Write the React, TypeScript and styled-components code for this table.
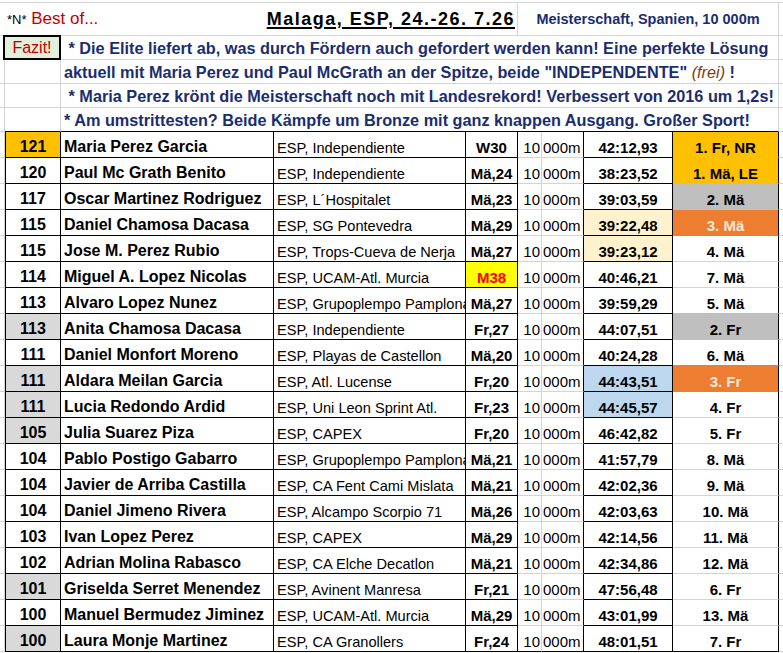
import React from "react";
import styled, { createGlobalStyle, css } from "styled-components";

const FONT = `"Liberation Sans", Arial, Helvetica, sans-serif`;
const GRID = "#d4d4d4";
const INK = "#000";
const NAVY = "#1a2d6e";
const GOLD = "#ffc000";
const SILVER = "#bfbfbf";
const BRONZE = "#ed7d31";
const WOMAN = "#d9d9d9";
const CREAM = "#fff2cc";
const BLUE = "#bdd7ee";

type Runner = {
  score: number;
  name: string;
  club: string;
  age: string;
  time: string;
  place: string;
  scoreBg?: string;
  timeBg?: string;
  placeBg?: string;
  ageFlag?: boolean;
};

const runners: Runner[] = [
  { score: 121, name: "Maria Perez Garcia", club: "ESP, Independiente", age: "W30", time: "42:12,93", place: "1. Fr, NR", scoreBg: GOLD, placeBg: GOLD },
  { score: 120, name: "Paul Mc Grath Benito", club: "ESP, Independiente", age: "Mä,24", time: "38:23,52", place: "1. Mä, LE", placeBg: GOLD },
  { score: 117, name: "Oscar Martinez Rodriguez", club: "ESP, L´Hospitalet", age: "Mä,23", time: "39:03,59", place: "2. Mä", placeBg: SILVER },
  { score: 115, name: "Daniel Chamosa Dacasa", club: "ESP, SG Pontevedra", age: "Mä,29", time: "39:22,48", place: "3. Mä", timeBg: CREAM, placeBg: BRONZE },
  { score: 115, name: "Jose M. Perez Rubio", club: "ESP, Trops-Cueva de Nerja", age: "Mä,27", time: "39:23,12", place: "4. Mä", timeBg: CREAM },
  { score: 114, name: "Miguel A. Lopez Nicolas", club: "ESP, UCAM-Atl. Murcia", age: "M38", time: "40:46,21", place: "7. Mä", ageFlag: true },
  { score: 113, name: "Alvaro Lopez Nunez", club: "ESP, Grupoplempo Pamplona", age: "Mä,27", time: "39:59,29", place: "5. Mä" },
  { score: 113, name: "Anita Chamosa Dacasa", club: "ESP, Independiente", age: "Fr,27", time: "44:07,51", place: "2. Fr", scoreBg: WOMAN, placeBg: SILVER },
  { score: 111, name: "Daniel Monfort Moreno", club: "ESP, Playas de Castellon", age: "Mä,20", time: "40:24,28", place: "6. Mä" },
  { score: 111, name: "Aldara Meilan Garcia", club: "ESP, Atl. Lucense", age: "Fr,20", time: "44:43,51", place: "3. Fr", scoreBg: WOMAN, timeBg: BLUE, placeBg: BRONZE },
  { score: 111, name: "Lucia Redondo Ardid", club: "ESP, Uni Leon Sprint Atl.", age: "Fr,23", time: "44:45,57", place: "4. Fr", scoreBg: WOMAN, timeBg: BLUE },
  { score: 105, name: "Julia Suarez Piza", club: "ESP, CAPEX", age: "Fr,20", time: "46:42,82", place: "5. Fr", scoreBg: WOMAN },
  { score: 104, name: "Pablo Postigo Gabarro", club: "ESP, Grupoplempo Pamplona", age: "Mä,21", time: "41:57,79", place: "8. Mä" },
  { score: 104, name: "Javier de Arriba Castilla", club: "ESP, CA Fent Cami Mislata", age: "Mä,21", time: "42:02,36", place: "9. Mä" },
  { score: 104, name: "Daniel Jimeno Rivera", club: "ESP, Alcampo Scorpio 71", age: "Mä,26", time: "42:03,63", place: "10. Mä" },
  { score: 103, name: "Ivan Lopez Perez", club: "ESP, CAPEX", age: "Mä,29", time: "42:14,56", place: "11. Mä" },
  { score: 102, name: "Adrian Molina Rabasco", club: "ESP, CA Elche Decatlon", age: "Mä,21", time: "42:34,86", place: "12. Mä" },
  { score: 101, name: "Griselda Serret Menendez", club: "ESP, Avinent Manresa", age: "Fr,21", time: "47:56,48", place: "6. Fr", scoreBg: WOMAN },
  { score: 100, name: "Manuel Bermudez Jiminez", club: "ESP, UCAM-Atl. Murcia", age: "Mä,29", time: "43:01,99", place: "13. Mä" },
  { score: 100, name: "Laura Monje Martinez", club: "ESP, CA Granollers", age: "Fr,24", time: "48:01,51", place: "7. Fr", scoreBg: WOMAN },
];

const notes = [
  " * Die Elite liefert ab, was durch Fördern auch gefordert werden kann! Eine perfekte Lösung",
  'aktuell mit Maria Perez und Paul McGrath an der Spitze, beide "INDEPENDENTE" ',
  " * Maria Perez krönt die Meisterschaft noch mit Landesrekord! Verbessert von 2016 um 1,2s!",
  "* Am umstrittesten? Beide Kämpfe um Bronze mit ganz knappen Ausgang. Großer Sport!",
];

const GlobalStyle = createGlobalStyle`
  body {
    margin: 0;
    background: #fff;
    font-family: ${FONT};
  }
`;

const Sheet = styled.div`
  display: grid;
  grid-template-columns: 5px 56px 213px 192px 52px 24px 42px 89px 106px 4px;
  grid-template-rows: 33px repeat(4, 24px) repeat(20, 26px);
  margin-top: 2px;
  border-top: 1px solid ${GRID};
  width: 783px;
  font-family: ${FONT};
  color: ${INK};
`;

const cellBase = css`
  box-sizing: border-box;
  display: flex;
  align-items: flex-end;
  min-width: 0;
  white-space: nowrap;
  overflow: hidden;
  padding-bottom: 1px;
`;

const Gap = styled.div<{ $edge?: boolean }>`
  ${cellBase}
  border-bottom: 1px solid ${GRID};
  border-right: ${({ $edge }) => ($edge ? `1px solid ${GRID}` : "none")};
`;

/* header */
const TitleLead = styled.div`
  grid-column: 1 / 3;
  display: flex;
  align-items: center;
  padding-left: 7px;
  white-space: nowrap;
  overflow: visible;
  border-bottom: 1px solid ${GRID};
  z-index: 1;
`;

const Star = styled.span`
  font-size: 13px;
`;

const BestOf = styled.span`
  font-size: 17px;
  color: #c00000;
`;

const EventTitle = styled.div`
  grid-column: 3 / 6;
  box-sizing: border-box;
  display: flex;
  align-items: center;
  justify-content: flex-end;
  padding-right: 2px;
  white-space: nowrap;
  border-right: 1px solid ${GRID};
  border-bottom: 1px solid ${GRID};
  font-size: 18px;
  font-weight: 700;
  letter-spacing: 1.5px;
  text-decoration: underline;
  text-decoration-thickness: 1.5px;
  text-underline-offset: 2px;
`;

const EventInfo = styled.div`
  grid-column: 6 / 10;
  box-sizing: border-box;
  display: flex;
  align-items: center;
  justify-content: center;
  white-space: nowrap;
  border-right: 1px solid ${GRID};
  border-bottom: 1px solid ${GRID};
  font-size: 14.5px;
  font-weight: 700;
  color: ${NAVY};
`;

const FazitSlot = styled.div`
  grid-column: 1 / 3;
  overflow: visible;
  z-index: 2;
`;

const FazitBox = styled.div`
  box-sizing: border-box;
  width: 58px;
  height: 25px;
  margin: -1px 0 0 3px;
  display: flex;
  align-items: center;
  justify-content: center;
  border: 2px solid #000;
  background: #e2efda;
  color: #c00000;
  font-size: 16px;
`;

const NoteCell = styled.div<{ $last?: boolean }>`
  ${cellBase}
  grid-column: 3 / 10;
  padding-left: 3px;
  border-right: 1px solid ${GRID};
  border-bottom: 1px solid ${({ $last }) => ($last ? INK : GRID)};
  font-size: 16.25px;
  font-weight: 700;
  color: ${NAVY};
`;

const NoteText = styled.span`
  white-space: pre;
`;

const Frei = styled.span`
  font-weight: 400;
  font-style: italic;
  color: #7a3e10;
`;

const BlankScore = styled.div<{ $last?: boolean }>`
  ${cellBase}
  border-right: 1px solid ${GRID};
  border-bottom: 1px solid ${({ $last }) => ($last ? INK : GRID)};
`;

/* table body */
const dataCell = css<{ $bg?: string }>`
  ${cellBase}
  background: ${({ $bg }) => $bg ?? "#fff"};
  border-right: 1px solid ${INK};
  border-bottom: 1px solid ${INK};
`;

const ScoreCell = styled.div<{ $bg?: string }>`
  ${dataCell}
  justify-content: center;
  border-left: 1px solid ${INK};
  font-size: 16px;
  font-weight: 700;
`;

const NameCell = styled.div`
  ${dataCell}
  padding-left: 3px;
  font-size: 16px;
  font-weight: 700;
`;

const ClubCell = styled.div`
  ${dataCell}
  padding-left: 3px;
  font-size: 14.6px;
`;

const AgeCell = styled.div<{ $bg?: string; $flag?: boolean }>`
  ${dataCell}
  justify-content: center;
  font-size: 15px;
  font-weight: 700;
  color: ${({ $flag }) => ($flag ? "#ff0000" : INK)};
`;

const TenCell = styled.div<{ $last?: boolean }>`
  ${cellBase}
  justify-content: flex-end;
  padding-right: 1px;
  border-right: 1px solid ${GRID};
  border-bottom: 1px solid ${({ $last }) => ($last ? INK : GRID)};
  font-size: 15px;
`;

const DistCell = styled.div<{ $last?: boolean }>`
  ${cellBase}
  padding-left: 1px;
  border-right: 1px solid ${INK};
  border-bottom: 1px solid ${({ $last }) => ($last ? INK : GRID)};
  font-size: 15px;
`;

const TimeCell = styled.div<{ $bg?: string }>`
  ${dataCell}
  justify-content: center;
  font-size: 15px;
  font-weight: 700;
`;

const PlaceCell = styled.div<{ $bg?: string; $line: string; $light?: boolean }>`
  ${cellBase}
  justify-content: center;
  background: ${({ $bg }) => $bg ?? "#fff"};
  border-right: 1px solid ${INK};
  border-bottom: 1px solid ${({ $line }) => $line};
  font-size: 15px;
  font-weight: 700;
  color: ${({ $light }) => ($light ? "#fde9d9" : INK)};
`;

const placeLine = (i: number) => {
  if (i === runners.length - 1) return INK;
  const own = runners[i].placeBg;
  const next = runners[i + 1].placeBg;
  return own ?? next ?? GRID;
};

const App = () => {
  return (
    <>
      <GlobalStyle />
      <Sheet>
        <TitleLead>
          <Star>*N*</Star>
          <BestOf>&nbsp;Best of...</BestOf>
        </TitleLead>
        <EventTitle>Malaga, ESP, 24.-26. 7.26</EventTitle>
        <EventInfo>Meisterschaft, Spanien, 10 000m</EventInfo>
        <Gap />

        {notes.map((note, i) => (
          <React.Fragment key={i}>
            {i === 0 ? (
              <FazitSlot>
                <FazitBox>Fazit!</FazitBox>
              </FazitSlot>
            ) : (
              <>
                <Gap $edge />
                <BlankScore $last={i === notes.length - 1} />
              </>
            )}
            <NoteCell $last={i === notes.length - 1}>
              <NoteText>
                {note}
                {i === 1 && (
                  <>
                    <Frei>(frei)</Frei>
                    {" !"}
                  </>
                )}
              </NoteText>
            </NoteCell>
            <Gap />
          </React.Fragment>
        ))}

        {runners.map((r, i) => {
          const last = i === runners.length - 1;
          return (
            <React.Fragment key={r.name}>
              <Gap $edge />
              <ScoreCell $bg={r.scoreBg}>{r.score}</ScoreCell>
              <NameCell>{r.name}</NameCell>
              <ClubCell>{r.club}</ClubCell>
              <AgeCell $bg={r.ageFlag ? "#ffff00" : undefined} $flag={r.ageFlag}>
                {r.age}
              </AgeCell>
              <TenCell $last={last}>10</TenCell>
              <DistCell $last={last}>000m</DistCell>
              <TimeCell $bg={r.timeBg}>{r.time}</TimeCell>
              <PlaceCell
                $bg={r.placeBg}
                $line={placeLine(i)}
                $light={r.placeBg === BRONZE}
              >
                {r.place}
              </PlaceCell>
              <Gap />
            </React.Fragment>
          );
        })}
      </Sheet>
    </>
  );
};

export default App;
